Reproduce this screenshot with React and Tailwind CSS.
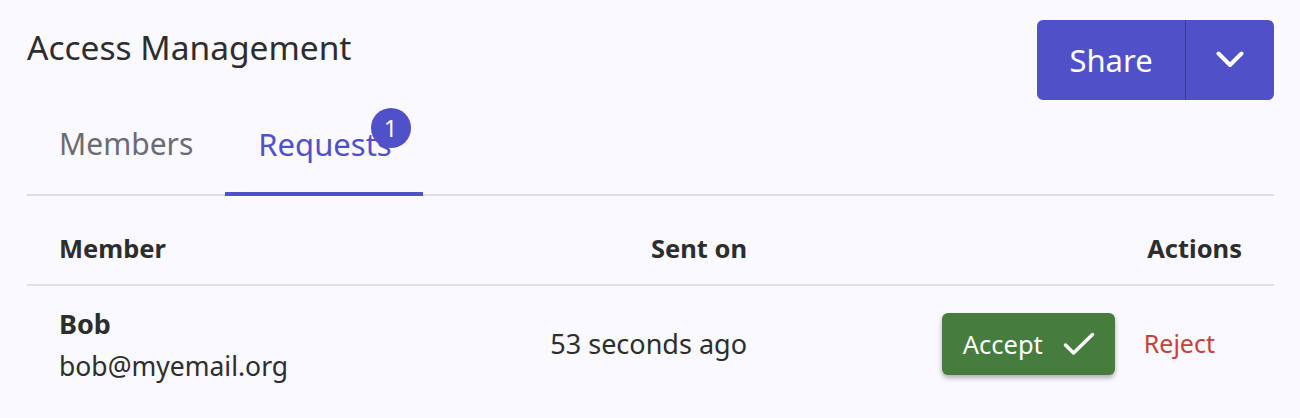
import React from 'react';

const requests = [
    { name: 'Bob', email: 'bob@myemail.org', sentOn: '53 seconds ago' },
];

export default function App() {
    return (
        <div className="min-h-screen bg-[#f9f9fe] pl-[27px] pr-[26px] pt-[20px] text-[#2d2d2d] font-['Noto_Sans',sans-serif]">
            {/* Header */}
            <div className="flex items-start justify-between">
                <h1 className="mt-[5px] text-[33.5px] leading-[44px] font-normal">Access Management</h1>
                <div className="flex h-[80px] overflow-hidden rounded-[6px] bg-[#5050c8] text-white">
                    <button className="w-[149px] text-[31px] border-r border-[#3a3a96]">Share</button>
                    <button className="flex w-[88px] items-center justify-center">
                        <svg width="28" height="18" viewBox="0 0 28 18" fill="none" stroke="currentColor" strokeWidth="4" strokeLinecap="round" strokeLinejoin="round">
                            <path d="M2.5 2.5 L14 14 L25.5 2.5" />
                        </svg>
                    </button>
                </div>
            </div>

            {/* Tabs */}
            <div className="flex border-b-2 border-[#dedee2]">
                <button className="px-8 pt-[24px] pb-[30px] text-[30px] leading-[40px] text-[#6b6b74]">Members</button>
                <button className="relative -mb-[2px] border-b-4 border-[#5050c8] pl-[33px] pr-[31px] pt-[24px] pb-[28px] text-[31px] leading-[40px] text-[#5050c8]">
                    Requests
                    <span className="absolute right-[12px] top-[8px] flex h-[40px] w-[40px] items-center justify-center rounded-full bg-[#5050c8] text-[24px] leading-none text-white">1</span>
                </button>
            </div>

            {/* Table */}
            <div className="grid grid-cols-[1fr_300px_495px] border-b-2 border-[#e0e0e0] pt-[36px] pb-[20px] text-[25.5px] font-bold leading-[32px]">
                <div className="pl-8">Member</div>
                <div className="pr-8 text-right">Sent on</div>
                <div className="pr-8 text-right">Actions</div>
            </div>
            {requests.map((r) => (
                <div key={r.email} className="grid grid-cols-[1fr_300px_495px] items-center pt-[20px] pb-[24px]">
                    <div className="pl-8">
                        <div className="text-[27px] font-bold leading-[36px]">{r.name}</div>
                        <div className="mt-[8px] text-[26.5px] leading-[32px]">{r.email}</div>
                    </div>
                    <div className="pr-8 text-right text-[27px]">{r.sentOn}</div>
                    <div className="flex items-center justify-end gap-[29px] pr-[59px]">
                        <button className="flex h-[62px] w-[173px] items-center gap-[20px] rounded-[6px] bg-[#467c3e] pl-[21px] text-[25.5px] text-white shadow-[0_3px_5px_rgba(0,0,0,0.3)]">
                            Accept
                            <svg width="32" height="24" viewBox="0 0 32 24" fill="none" stroke="currentColor" strokeWidth="3.5" strokeLinecap="round" strokeLinejoin="round">
                                <path d="M2.5 13 L10.5 21 L29.5 2.5" />
                            </svg>
                        </button>
                        <button className="text-[25px] text-[#c8403c]">Reject</button>
                    </div>
                </div>
            ))}
        </div>
    );
}
